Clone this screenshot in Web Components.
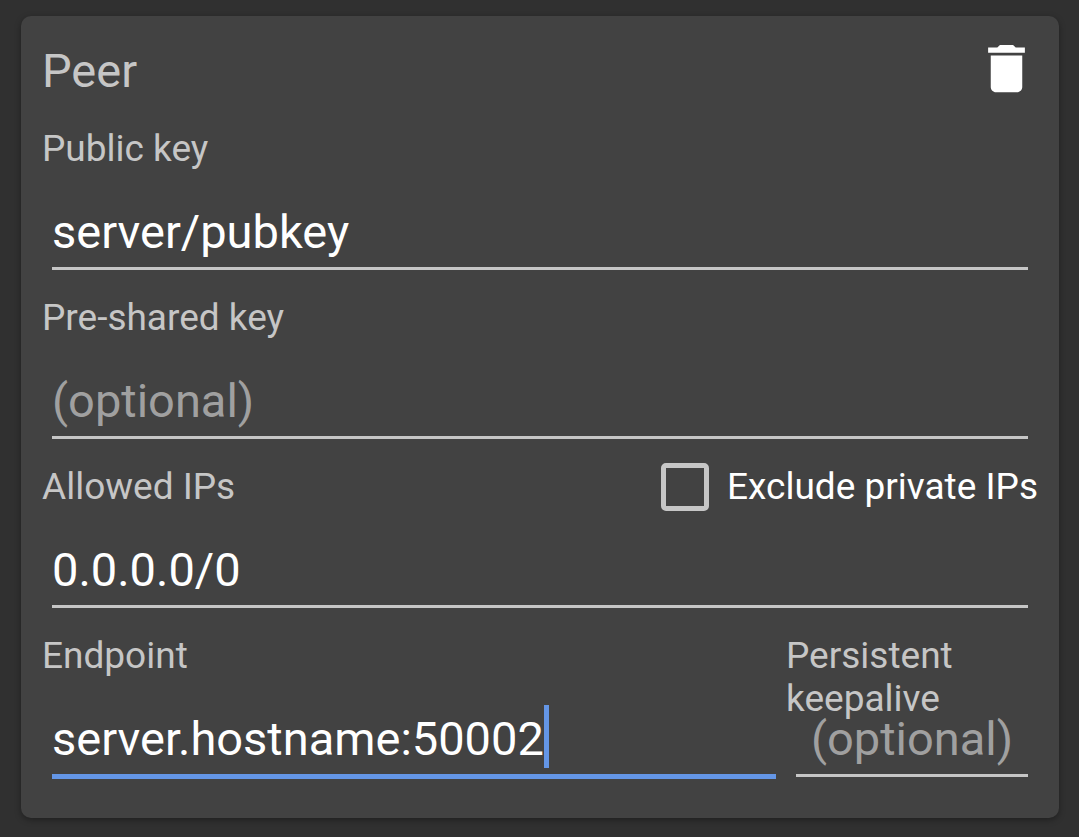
<!DOCTYPE html>
<html lang="en">
<head>
<meta charset="utf-8">
<meta name="viewport" content="width=device-width, initial-scale=1">
<title>Peer</title>
<style>
  body {
    margin: 0;
    padding: 16px 20px 19px 21px;
    background: #303030;
    color: #fff;
    font-family: Roboto, "Liberation Sans", sans-serif;
    --muted: #c6c6c6;
    --hint: #a0a0a0;
    --accent: #6496e6;
    --surface: #424242;
  }
</style>
</head>
<body>
<peer-card>
  <span slot="title">Peer</span>
  <delete-button slot="action"></delete-button>
  <text-field label="Public key" value="server/pubkey"></text-field>
  <text-field label="Pre-shared key" placeholder="(optional)"></text-field>
  <text-field label="Allowed IPs" value="0.0.0.0/0">
    <check-option slot="extra">Exclude private IPs</check-option>
  </text-field>
  <field-row>
    <text-field label="Endpoint" value="server.hostname:50002" active></text-field>
    <text-field slot="side" label="Persistent keepalive" placeholder="(optional)" centered></text-field>
  </field-row>
</peer-card>

<script>
class PeerCard extends HTMLElement {
  constructor() {
    super();
    this.attachShadow({ mode: "open" }).innerHTML = `
      <style>
        :host {
          display: block;
          padding: 21px 21px 15px;
          border-radius: 10px;
          background: var(--surface);
          box-shadow: 0 2px 6px rgba(0, 0, 0, .35);
        }
        header {
          display: flex;
          justify-content: space-between;
          align-items: flex-end;
          margin-bottom: 27px;
        }
        h1 {
          margin: 0;
          color: var(--muted);
          font-size: 47px;
          font-weight: 400;
          line-height: 58px;
        }
      </style>
      <header><h1><slot name="title"></slot></h1><slot name="action"></slot></header>
      <slot></slot>`;
  }
}

class DeleteButton extends HTMLElement {
  constructor() {
    super();
    this.attachShadow({ mode: "open" }).innerHTML = `
      <style>
        :host { display: block; }
        button {
          display: block;
          padding: 0;
          border: 0;
          background: none;
          color: inherit;
          cursor: pointer;
        }
        svg { display: block; width: 63px; height: 63px; fill: currentColor; }
      </style>
      <button type="button" aria-label="Delete peer">
        <svg viewBox="0 0 24 24" aria-hidden="true">
          <path d="M6 19c0 1.1.9 2 2 2h8c1.1 0 2-.9 2-2V7H6v12zM19 4h-3.5l-1-1h-5l-1 1H5v2h14V4z"/>
        </svg>
      </button>`;
  }
}

class FieldRow extends HTMLElement {
  constructor() {
    super();
    this.attachShadow({ mode: "open" }).innerHTML = `
      <style>
        :host { display: flex; align-items: flex-start; }
        .main { flex: 1; min-width: 0; }
        .side { flex: 0 0 252px; min-width: 0; }
      </style>
      <div class="main"><slot></slot></div>
      <div class="side"><slot name="side"></slot></div>`;
  }
}

class CheckOption extends HTMLElement {
  constructor() {
    super();
    this.attachShadow({ mode: "open" }).innerHTML = `
      <style>
        :host { display: block; }
        label {
          display: flex;
          align-items: center;
          gap: 18px;
          height: 43px;
          color: #fff;
          font-size: 37px;
          line-height: 43px;
          white-space: nowrap;
        }
        input {
          appearance: none;
          box-sizing: border-box;
          flex: none;
          width: 48px;
          height: 48px;
          margin: 0;
          border: 5px solid var(--muted);
          border-radius: 5px;
        }
        input:checked { background: var(--accent); border-color: var(--accent); }
      </style>
      <label><input type="checkbox"><span><slot></slot></span></label>`;
  }
}

class TextField extends HTMLElement {
  constructor() {
    super();
    this.attachShadow({ mode: "open" }).innerHTML = `
      <style>
        :host { display: block; }
        .head {
          display: flex;
          justify-content: space-between;
          height: 43px;
          margin-bottom: 28px;
        }
        .name { color: var(--muted); font-size: 37px; line-height: 43px; }
        .line {
          display: flex;
          align-items: flex-start;
          height: 69px;
          margin: 0 10px 26px;
          border-bottom: 3px solid var(--muted);
        }
        input {
          flex: 1;
          min-width: 0;
          height: 56px;
          margin: 0;
          padding: 6px 0 0;
          border: 0;
          outline: 0;
          background: none;
          color: inherit;
          font: 47px/56px Roboto, "Liberation Sans", sans-serif;
        }
        input::placeholder { color: var(--hint); opacity: 1; }
        .caret { display: none; width: 5px; height: 63px; background: var(--accent); }
        :host([centered]) input { text-align: center; }
        :host([active]) .line { border-bottom: 5px solid var(--accent); margin-bottom: 24px; }
        :host([active]) input { flex: 0 1 auto; field-sizing: content; caret-color: transparent; }
        :host([active]) .caret { display: block; flex: none; }
      </style>
      <div class="head"><label class="name" for="field"></label><slot name="extra"></slot></div>
      <div class="line"><input id="field" type="text" spellcheck="false"><span class="caret"></span></div>`;
  }
  connectedCallback() {
    const input = this.shadowRoot.querySelector("input");
    this.shadowRoot.querySelector("label").textContent = this.getAttribute("label");
    input.value = this.getAttribute("value") || "";
    input.placeholder = this.getAttribute("placeholder") || "";
  }
}

customElements.define("peer-card", PeerCard);
customElements.define("delete-button", DeleteButton);
customElements.define("field-row", FieldRow);
customElements.define("check-option", CheckOption);
customElements.define("text-field", TextField);
</script>
</body>
</html>
